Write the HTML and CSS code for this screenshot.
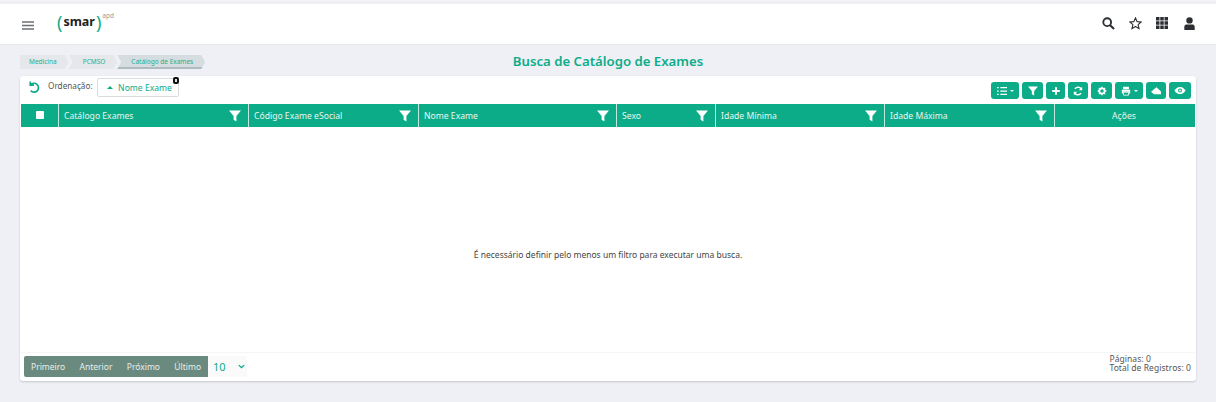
FILE: index.html
```html
<!DOCTYPE html>
<html lang="pt">
<head>
<meta charset="utf-8">
<title>Busca de Catálogo de Exames</title>
<link rel="stylesheet" href="styles.css">
</head>
<body>
<svg class="defs" width="0" height="0">
  <defs>
    <symbol id="funnel" viewBox="0 0 12 12"><path d="M0 .5h12L7.4 6v5.5L4.6 9.800V6z"/></symbol>
  </defs>
</svg>
<header class="topbar">
  <div class="brand">
    <svg class="burger" viewBox="0 0 12 9" preserveAspectRatio="none"><path d="M0 1h12M0 4.500h12M0 8h12"/></svg>
    <div class="logo"><span class="paren">(</span><span class="logo-word">smar</span><span class="paren">)</span><sup class="logo-sup">apd</sup></div>
  </div>
  <div class="top-icons">
    <svg viewBox="0 0 14 14"><circle cx="5.600" cy="5.600" r="4.200" fill="none" stroke="#2b2f33" stroke-width="2"/><path d="M8.800 8.800L13 13" stroke="#2b2f33" stroke-width="2.200"/></svg>
    <svg viewBox="0 0 14 14"><path d="M7 1l1.800 4 4.200.4-3.200 2.800 1 4.300L7 10.200 3.200 12.500l1-4.300L1 5.400 5.200 5z" fill="none" stroke="#2b2f33" stroke-width="1.200"/></svg>
    <svg class="grid-icon" viewBox="0 0 12 12"><path fill="#2b2f33" d="M0 0h3.500v3.500H0zM4.250 0h3.500v3.500h-3.500zM8.500 0H12v3.500H8.500zM0 4.250h3.500v3.500H0zM4.250 4.250h3.500v3.500h-3.500zM8.500 4.250H12v3.500H8.500zM0 8.500h3.500V12H0zM4.250 8.500h3.500V12h-3.500zM8.500 8.500H12V12H8.500z"/></svg>
    <svg viewBox="0 0 12 13"><circle cx="6" cy="3.400" r="3.200" fill="#2b2f33"/><path fill="#2b2f33" d="M.8 13V9.800C.8 8 2.200 7.400 3.500 7.400h5c1.300 0 2.700.6 2.700 2.400V13z"/></svg>
  </div>
</header>

<div class="titlebar">
  <nav class="crumbs">
    <span class="crumb">Medicina</span>
    <span class="crumb">PCMSO</span>
    <span class="crumb crumb-active">Catálogo de Exames</span>
  </nav>
  <h1 class="page-title">Busca de Catálogo de Exames</h1>
</div>

<main class="card">
  <div class="toolbar">
    <div class="sorting">
      <svg class="undo" viewBox="0 0 14 14"><path d="M3.500 1.500v4h4M3.800 5.300A4.800 4.800 0 1 1 4 11.500" fill="none" stroke="#0dac88" stroke-width="1.800"/></svg>
      <span class="sort-label">Ordenação:</span>
      <span class="sort-chip"><span class="caret-up"></span>Nome Exame<span class="chip-badge"></span></span>
    </div>
    <div class="actions">
      <button class="tool tool-wide"><svg viewBox="0 0 12 10"><path d="M0 1h2M4 1h8M0 5h2M4 5h8M0 9h2M4 9h8" stroke="#fff" stroke-width="1.500"/></svg><span class="caret-down"></span></button>
      <button class="tool tool-f"><svg viewBox="0 0 12 12" fill="#fff"><use href="#funnel"/></svg></button>
      <button class="tool tool-b"><svg viewBox="0 0 12 12"><path d="M6 1.500v9M1.500 6h9" stroke="#fff" stroke-width="2.400"/></svg></button>
      <button class="tool tool-a"><svg viewBox="0 0 12 12"><path d="M10.500 4.500A4.700 4.700 0 0 0 2.300 3.500M1.500 7.500a4.700 4.700 0 0 0 8.200 1" fill="none" stroke="#fff" stroke-width="1.700"/><path fill="#fff" d="M11 .8v4.200H7zM1 11.200V7h4z"/></svg></button>
      <button class="tool tool-f"><svg viewBox="0 0 12 12"><circle cx="6" cy="6" r="3.200" fill="none" stroke="#fff" stroke-width="2.200"/><path d="M6 .8v2M6 9.200v2M.8 6h2M9.200 6h2M2.300 2.300l1.400 1.400M8.300 8.300l1.400 1.400M2.300 9.700l1.400-1.400M8.300 3.700l1.400-1.400" stroke="#fff" stroke-width="1.600"/></svg></button>
      <button class="tool tool-print"><svg viewBox="0 0 12 12"><path fill="#fff" d="M2.500 1h7v3h-7zM1 4.500h10v4.500H9.500V7h-7v2H1z"/><path fill="none" stroke="#fff" d="M3 7.500h6v3.500H3z"/></svg><span class="caret-down"></span></button>
      <button class="tool tool-a"><svg viewBox="0 0 12 12"><path fill="#fff" d="M6.500 1.500L12 6.500V10H3.500L0 7z"/></svg></button>
      <button class="tool tool-c"><svg class="eye" viewBox="0 0 14 10"><path d="M.5 5C2.500 2 4.500.8 7 .8S11.500 2 13.500 5C11.500 8 9.500 9.200 7 9.200S2.500 8 .5 5z" fill="#fff"/><circle cx="7" cy="5" r="2.300" fill="#0dac88"/><circle cx="7" cy="5" r="1.100" fill="#fff"/></svg></button>
    </div>
  </div>

  <div class="thead">
    <div class="th th-check"><span class="checkbox"></span></div>
    <div class="th"><span>Catálogo Exames</span><svg class="funnel"><use href="#funnel"/></svg></div>
    <div class="th"><span>Código Exame eSocial</span><svg class="funnel"><use href="#funnel"/></svg></div>
    <div class="th"><span>Nome Exame</span><svg class="funnel"><use href="#funnel"/></svg></div>
    <div class="th"><span>Sexo</span><svg class="funnel"><use href="#funnel"/></svg></div>
    <div class="th"><span>Idade Mínima</span><svg class="funnel"><use href="#funnel"/></svg></div>
    <div class="th"><span>Idade Máxima</span><svg class="funnel"><use href="#funnel"/></svg></div>
    <div class="th th-actions">Ações</div>
  </div>

  <div class="empty">É necessário definir pelo menos um filtro para executar uma busca.</div>

  <footer class="pager">
    <div class="pager-left">
      <div class="pager-btns">
        <span>Primeiro</span><span>Anterior</span><span>Próximo</span><span>Último</span>
      </div>
      <div class="page-size">10<svg viewBox="0 0 10 6"><path d="M1 1l4 3.500L9 1" fill="none" stroke="#0dac88" stroke-width="1.800"/></svg></div>
    </div>
    <div class="totals">Páginas: 0<br>Total de Registros: 0</div>
  </footer>
</main>
</body>
</html>
```
FILE: styles.css
```css
* { box-sizing: border-box; }
html, body { margin: 0; height: 402px; overflow: hidden; }
body {
  background: #eef0f5;
  font-family: "Noto Sans", "Liberation Sans", sans-serif;
  color: #444;
  padding-top: 4px;
  border-top: 1px solid #f4f4f5;
}
.defs { position: absolute; }

.topbar {
  height: 40px;
  margin-top: -1px;
  background: #fff;
  display: flex;
  justify-content: space-between;
  box-shadow: 0 1px 1px #e8e9ec;
}
.brand { display: flex; align-items: flex-start; padding-left: 22px; }
.burger { width: 12px; height: 9px; margin-top: 17px; stroke: #6d7073; stroke-width: 1.400; }
.logo { margin-left: 23px; margin-top: 7px; line-height: 22px; display: flex; align-items: flex-start; color: #222; }
.paren { font-size: 18px; color: #0dac88; font-weight: 400; line-height: 22px; }
.logo-word { font-size: 12.500px; font-weight: 700; margin: 0 1px; }
.logo-sup { font-size: 6.500px; line-height: 10px; color: #999; margin-left: 1px; }
.top-icons { display: flex; align-items: center; gap: 14px; padding: 0 20px 2px 0; }
.top-icons svg { width: 13px; height: 13px; display: block; }
.top-icons .grid-icon { width: 12px; height: 12px; margin: 0 1px 0 0; }

.titlebar { height: 32px; position: relative; padding: 11px 0 0 20px; }
.crumbs { display: flex; height: 14px; }
.crumb {
  height: 14px;
  font-size: 6.500px;
  line-height: 13px;
  color: #1fae8e;
  background: #e5e7ea;
  padding: 0 12px 0 9px;
  margin-right: 1px;
  clip-path: polygon(0 0, calc(100% - 4px) 0, 100% 50%, calc(100% - 4px) 100%, 0 100%);
}
.crumb + .crumb { clip-path: polygon(0 0, calc(100% - 4px) 0, 100% 50%, calc(100% - 4px) 100%, 0 100%, 4px 50%); padding-left: 14px; margin-left: -1px; }
.crumb-active { background: #d5dde0; border-bottom: 2px solid #aebbbf; }
.page-title {
  position: absolute;
  left: 0; right: 0; top: 7px;
  margin: 0;
  text-align: center;
  font-size: 13.200px;
  line-height: 20px;
  font-weight: 600;
  color: #0dac88;
}

.card {
  margin: 0 20px;
  height: 305px;
  background: #fff;
  border-radius: 3px;
  box-shadow: 0 1px 2px #c5c7cc;
  padding: 0 1px;
  display: flex;
  flex-direction: column;
}
.toolbar { height: 28px; display: flex; justify-content: space-between; padding: 0 4px 0 6px; }
.sorting { display: flex; align-items: flex-start; }
.undo { width: 13px; height: 13px; margin-top: 4px; }
.sort-label { font-size: 8.200px; line-height: 20px; margin-left: 8px; color: #555; }
.sort-chip {
  position: relative;
  margin-left: 4px;
  margin-top: 2px;
  width: 82px;
  height: 19px;
  border: 1px solid #dcdcdc;
  border-radius: 2px;
  font-size: 8.600px;
  color: #0dac88;
  display: flex;
  align-items: center;
  padding-left: 9.500px;
}
.caret-up { border: 3.500px solid transparent; border-bottom: 3.500px solid #0dac88; border-top: 0; margin-right: 5px; }
.chip-badge { position: absolute; right: -1px; top: -2px; width: 6px; height: 7px; background: #111; border-radius: 2px; border: 2px solid #111; box-shadow: inset 0 0 0 1px #ddd; }
.actions { display: flex; gap: 3px; padding-top: 6px; }
.tool {
  height: 17px;
  border: 0;
  padding: 0;
  background: #0dac88;
  border-radius: 3px;
  display: flex;
  align-items: center;
  justify-content: center;
  gap: 3px;
}
.tool svg { width: 10px; height: 10px; display: block; }
.tool .eye { width: 12px; height: 9px; }
.tool-a { width: 20px; }
.tool-b { width: 19px; }
.tool-c { width: 22px; }
.tool-f { width: 21px; }
.tool-wide { width: 28px; }
.tool-print { width: 28px; }
.caret-down { border: 2px solid transparent; border-top: 2px solid #fff; border-bottom: 0; }

.thead {
  height: 23px;
  display: grid;
  grid-template-columns: 38px 190px 170px 198px 99px 169px 170px 1fr;
  background: #0dac88;
  color: #e6f6f2;
  font-size: 8.600px;
}
.th {
  display: flex;
  align-items: center;
  justify-content: space-between;
  padding: 1px 7px 0 5px;
  border-right: 1px solid #bfe8de;
}
.th:last-child { border-right: 0; }
.th-check { justify-content: center; padding: 0 0 2px; }
.th-actions { justify-content: center; }
.checkbox { width: 8px; height: 8px; background: #fff; border-radius: 1px; }
.funnel { width: 12px; height: 12px; fill: #fff; }

.empty {
  flex: 1;
  display: flex;
  align-items: center;
  justify-content: center;
  font-size: 8.500px;
  color: #444;
  padding-top: 29px;
}

.pager {
  height: 29px;
  border-top: 1px solid #f5f5f5;
  display: flex;
  justify-content: space-between;
  padding: 3px 4px 4px 3px;
}
.pager-left { display: flex; }
.pager-btns {
  background: #6a8a7f;
  color: #e8eeec;
  font-size: 8.500px;
  display: flex;
  align-items: center;
  gap: 14.300px;
  padding: 0 7px;
  height: 21px;
  border-radius: 2px 0 0 2px;
}
.page-size {
  width: 39px;
  height: 21px;
  background: #fafafa;
  color: #0dac88;
  font-size: 11px;
  display: flex;
  align-items: center;
  justify-content: space-between;
  padding: 0 2px 1px 5px;
}
.page-size svg { width: 7px; height: 5px; }
.totals { font-size: 8.500px; line-height: 9px; margin-top: -2px; letter-spacing: .06px; color: #555; }
```
